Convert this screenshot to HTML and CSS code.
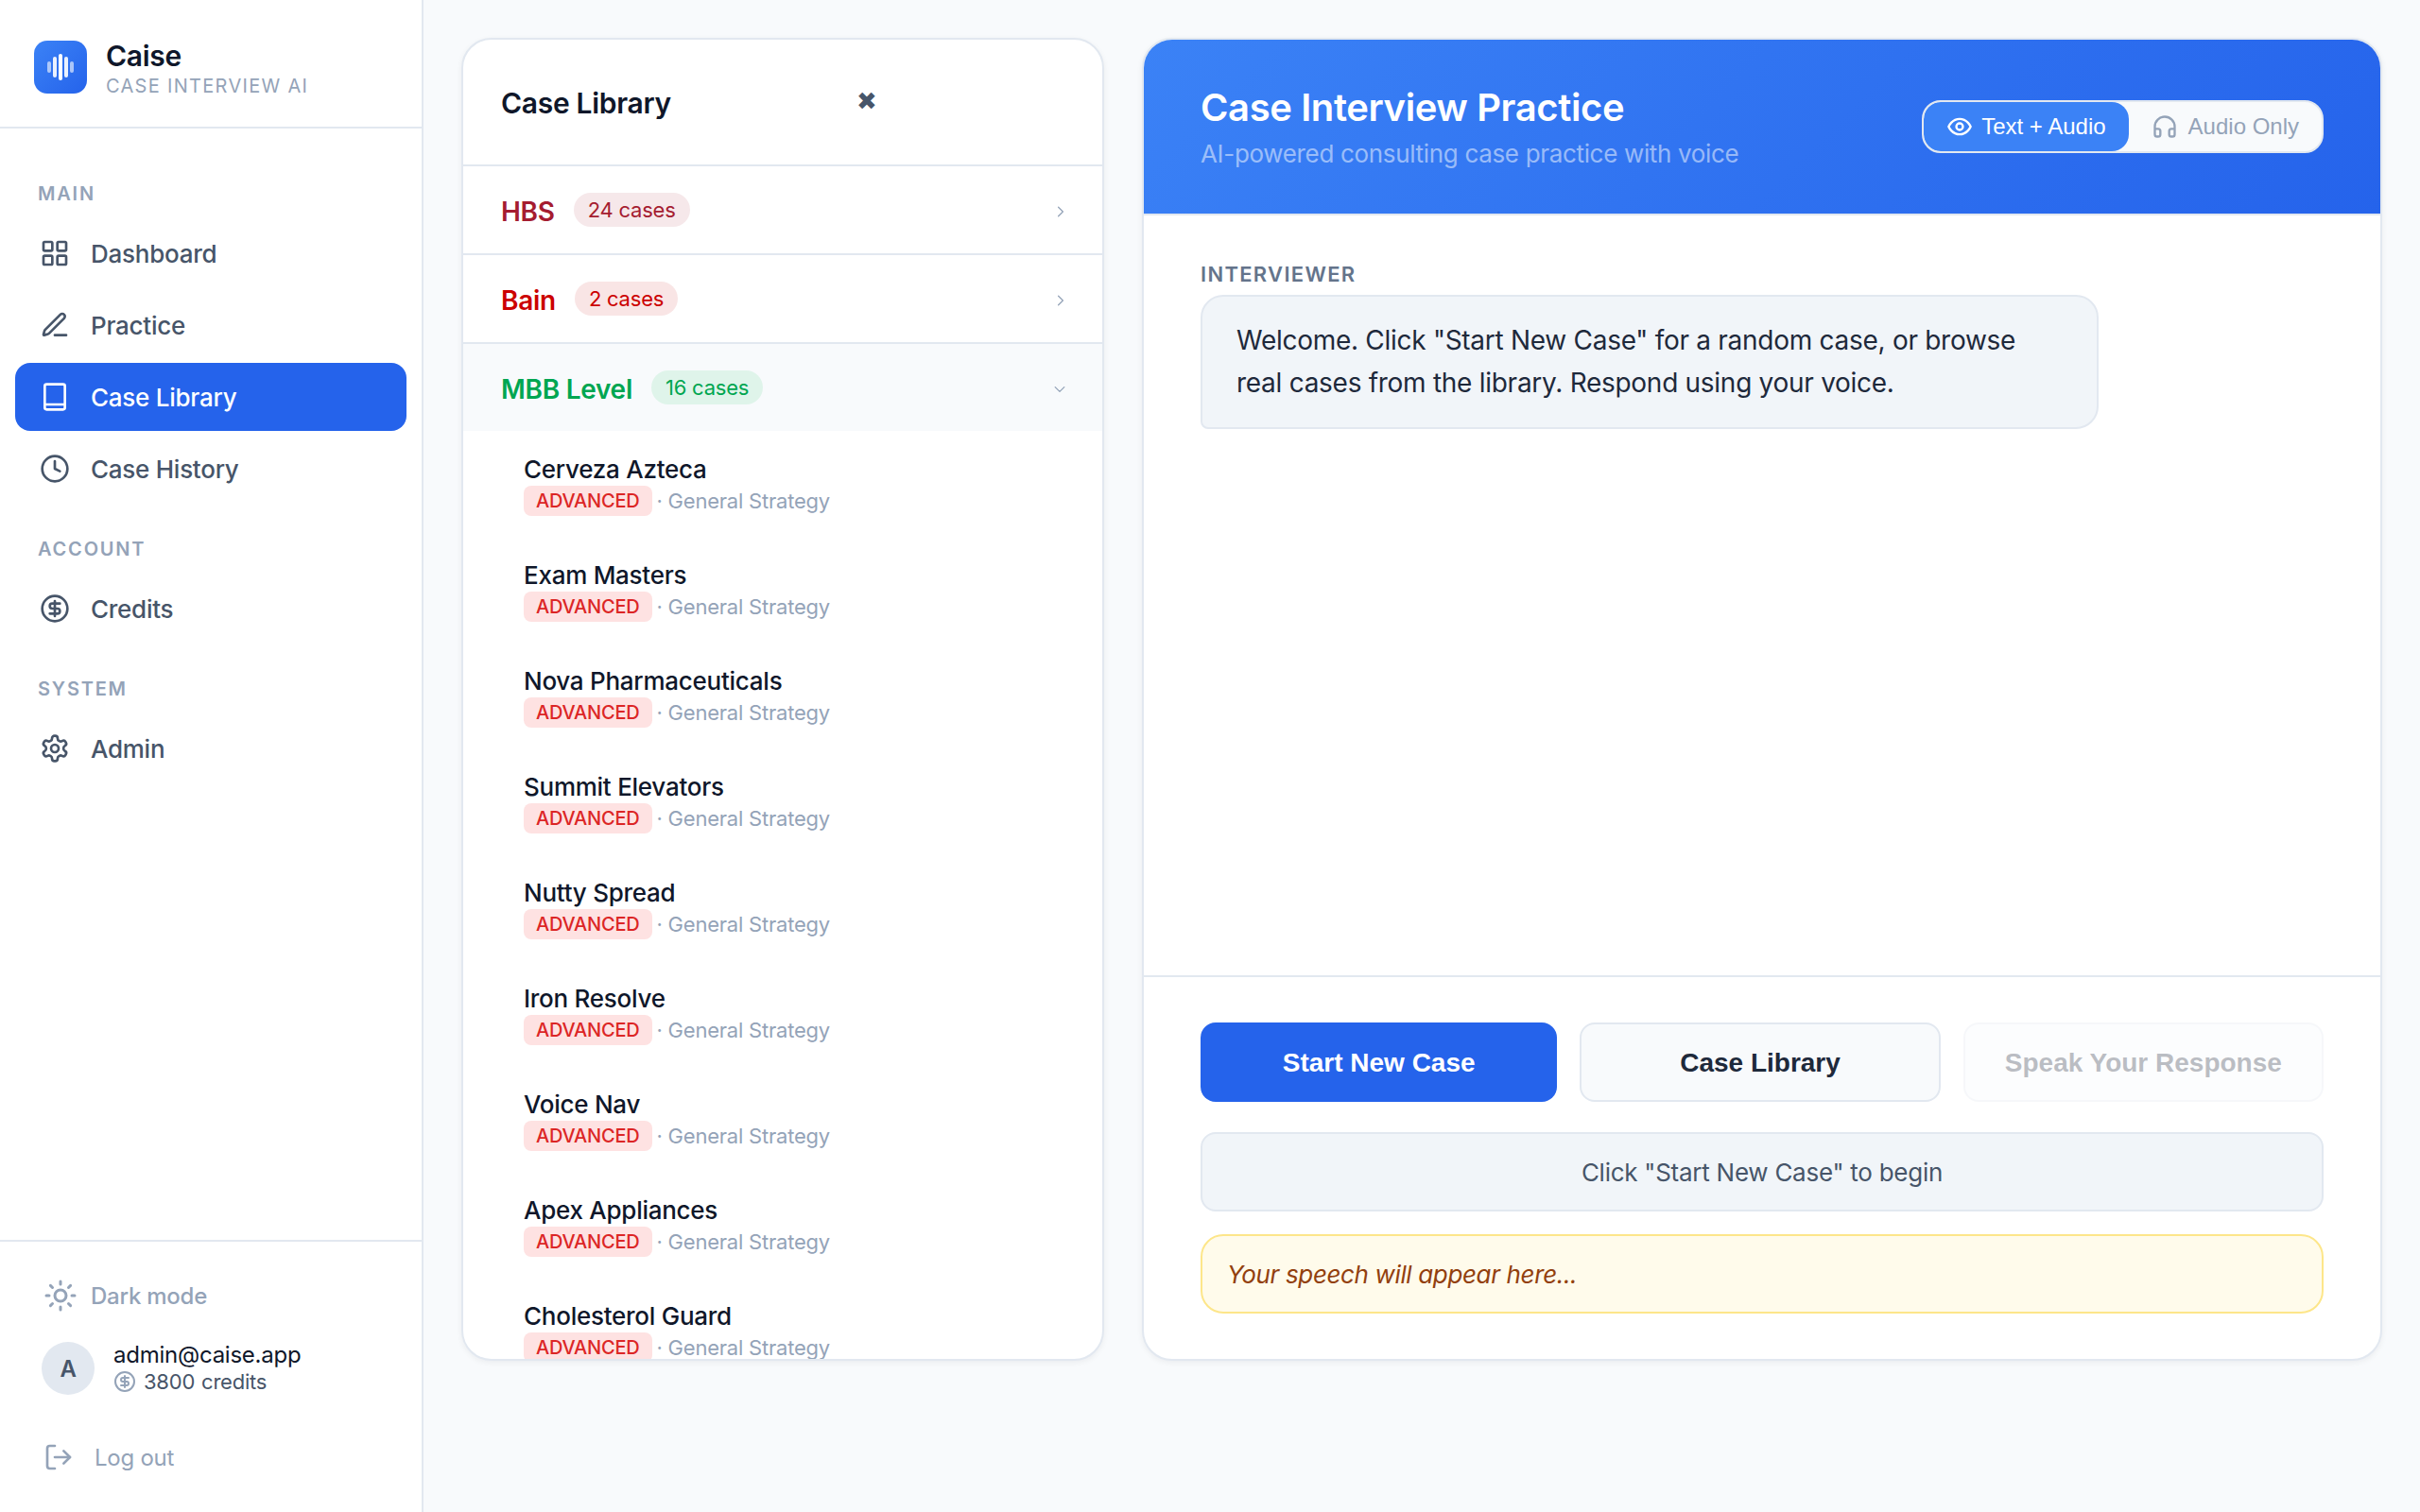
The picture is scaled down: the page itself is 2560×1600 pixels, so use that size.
FILE: index.html
```html
<!DOCTYPE html>
<html lang="en">
<head>
  <meta charset="UTF-8">
  <title>Caise - Case Interview Practice</title>
  <link rel="stylesheet" href="styles.css">
</head>
<body>

  <aside class="sidebar">
    <div class="brand">
      <div class="brand-logo">
        <span class="wave w1"></span><span class="wave w2"></span><span class="wave w3"></span><span class="wave w4"></span><span class="wave w5"></span>
      </div>
      <div class="brand-text">
        <div class="brand-name">Caise</div>
        <div class="brand-sub">CASE INTERVIEW AI</div>
      </div>
    </div>

    <nav class="nav">
      <div class="nav-label">MAIN</div>
      <div class="nav-group">
        <a class="nav-item">
          <svg class="icon" viewBox="0 0 24 24"><rect x="3" y="3" width="7" height="7" rx="1"/><rect x="14" y="3" width="7" height="7" rx="1"/><rect x="14" y="14" width="7" height="7" rx="1"/><rect x="3" y="14" width="7" height="7" rx="1"/></svg>
          Dashboard
        </a>
        <a class="nav-item">
          <svg class="icon" viewBox="0 0 24 24"><path d="M12 20h9"/><path d="M16.376 3.622a1 1 0 0 1 3.002 3.002L7.368 18.635a2 2 0 0 1-.855.506l-2.872.838a.5.5 0 0 1-.62-.62l.838-2.872a2 2 0 0 1 .506-.854z"/></svg>
          Practice
        </a>
        <a class="nav-item active">
          <svg class="icon" viewBox="0 0 24 24"><rect x="4" y="2" width="16" height="20" rx="1.5"/><path d="M4 18h16"/></svg>
          Case Library
        </a>
        <a class="nav-item">
          <svg class="icon" viewBox="0 0 24 24"><circle cx="12" cy="12" r="10"/><path d="M12 6v6l4 2"/></svg>
          Case History
        </a>
      </div>

      <div class="nav-label">ACCOUNT</div>
      <div class="nav-group">
        <a class="nav-item">
          <svg class="icon" viewBox="0 0 24 24"><circle cx="12" cy="12" r="10"/><path d="M16 8h-6a2 2 0 1 0 0 4h4a2 2 0 1 1 0 4H8"/><path d="M12 18V6"/></svg>
          Credits
        </a>
      </div>

      <div class="nav-label">SYSTEM</div>
      <div class="nav-group">
        <a class="nav-item">
          <svg class="icon" viewBox="0 0 24 24"><path d="M12.22 2h-.44a2 2 0 0 0-2 2v.18a2 2 0 0 1-1 1.73l-.43.25a2 2 0 0 1-2 0l-.15-.08a2 2 0 0 0-2.73.73l-.22.38a2 2 0 0 0 .73 2.73l.15.1a2 2 0 0 1 1 1.72v.51a2 2 0 0 1-1 1.74l-.15.09a2 2 0 0 0-.73 2.73l.22.38a2 2 0 0 0 2.73.73l.15-.08a2 2 0 0 1 2 0l.43.25a2 2 0 0 1 1 1.73V20a2 2 0 0 0 2 2h.44a2 2 0 0 0 2-2v-.18a2 2 0 0 1 1-1.73l.43-.25a2 2 0 0 1 2 0l.15.08a2 2 0 0 0 2.73-.73l.22-.39a2 2 0 0 0-.73-2.73l-.15-.08a2 2 0 0 1-1-1.74v-.5a2 2 0 0 1 1-1.74l.15-.09a2 2 0 0 0 .73-2.73l-.22-.38a2 2 0 0 0-2.73-.73l-.15.08a2 2 0 0 1-2 0l-.43-.25a2 2 0 0 1-1-1.73V4a2 2 0 0 0-2-2z"/><circle cx="12" cy="12" r="3"/></svg>
          Admin
        </a>
      </div>
    </nav>

    <div class="side-footer">
      <div class="dark-toggle">
        <svg class="icon-sun" viewBox="0 0 24 24"><circle cx="12" cy="12" r="4"/><path d="M12 2v2"/><path d="M12 20v2"/><path d="m4.93 4.93 1.41 1.41"/><path d="m17.66 17.66 1.41 1.41"/><path d="M2 12h2"/><path d="M20 12h2"/><path d="m6.34 17.66-1.41 1.41"/><path d="m19.07 4.93-1.41 1.41"/></svg>
        Dark mode
      </div>
      <div class="user">
        <div class="avatar">A</div>
        <div>
          <div class="user-email">admin@caise.app</div>
          <div class="user-credits">
            <svg class="icon-coin" viewBox="0 0 24 24"><circle cx="12" cy="12" r="10"/><path d="M16 8h-6a2 2 0 1 0 0 4h4a2 2 0 1 1 0 4H8"/><path d="M12 18V6"/></svg>
            <span>3800</span> <span>credits</span>
          </div>
        </div>
      </div>
      <div class="logout">
        <svg class="icon-logout" viewBox="0 0 24 24"><path d="M9 21H5a2 2 0 0 1-2-2V5a2 2 0 0 1 2-2h4"/><path d="m16 17 5-5-5-5"/><path d="M21 12H9"/></svg>
        Log out
      </div>
    </div>
  </aside>

  <main class="content">
    <section class="panel library">
      <div class="library-head">
        <h2>Case Library</h2>
        <span class="close">✖</span>
      </div>

      <div class="firm">
        <span class="firm-name hbs">HBS</span>
        <span class="firm-count hbs-count">24 cases</span>
        <svg class="chevron" viewBox="0 0 10 16"><path d="M2 2l6 6-6 6"/></svg>
      </div>
      <div class="firm">
        <span class="firm-name bain">Bain</span>
        <span class="firm-count bain-count">2 cases</span>
        <svg class="chevron" viewBox="0 0 10 16"><path d="M2 2l6 6-6 6"/></svg>
      </div>
      <div class="firm open">
        <span class="firm-name mbb">MBB Level</span>
        <span class="firm-count mbb-count">16 cases</span>
        <svg class="chevron-down" viewBox="0 0 16 10"><path d="M2 2l6 6 6-6"/></svg>
      </div>

      <div class="case-list">
        <div class="case-item">
          <div class="case-name">Cerveza Azteca</div>
          <div class="case-meta"><span class="level">ADVANCED</span><span>· General Strategy</span></div>
        </div>
        <div class="case-item">
          <div class="case-name">Exam Masters</div>
          <div class="case-meta"><span class="level">ADVANCED</span><span>· General Strategy</span></div>
        </div>
        <div class="case-item">
          <div class="case-name">Nova Pharmaceuticals</div>
          <div class="case-meta"><span class="level">ADVANCED</span><span>· General Strategy</span></div>
        </div>
        <div class="case-item">
          <div class="case-name">Summit Elevators</div>
          <div class="case-meta"><span class="level">ADVANCED</span><span>· General Strategy</span></div>
        </div>
        <div class="case-item">
          <div class="case-name">Nutty Spread</div>
          <div class="case-meta"><span class="level">ADVANCED</span><span>· General Strategy</span></div>
        </div>
        <div class="case-item">
          <div class="case-name">Iron Resolve</div>
          <div class="case-meta"><span class="level">ADVANCED</span><span>· General Strategy</span></div>
        </div>
        <div class="case-item">
          <div class="case-name">Voice Nav</div>
          <div class="case-meta"><span class="level">ADVANCED</span><span>· General Strategy</span></div>
        </div>
        <div class="case-item">
          <div class="case-name">Apex Appliances</div>
          <div class="case-meta"><span class="level">ADVANCED</span><span>· General Strategy</span></div>
        </div>
        <div class="case-item">
          <div class="case-name">Cholesterol Guard</div>
          <div class="case-meta"><span class="level">ADVANCED</span><span>· General Strategy</span></div>
        </div>
      </div>
    </section>

    <section class="panel practice">
      <header class="practice-head">
        <div class="practice-title">
          <h1>Case Interview Practice</h1>
          <p>AI-powered consulting case practice with voice</p>
        </div>
        <div class="mode-toggle">
          <button class="mode-btn active">
            <svg class="icon-mode" viewBox="0 0 24 24"><path d="M2 12s3-7 10-7 10 7 10 7-3 7-10 7-10-7-10-7Z"/><circle cx="12" cy="12" r="3"/></svg>
            Text + Audio
          </button>
          <button class="mode-btn">
            <svg class="icon-mode" viewBox="0 0 24 24"><path d="M3 14h3a2 2 0 0 1 2 2v3a2 2 0 0 1-2 2H5a2 2 0 0 1-2-2v-7a9 9 0 0 1 18 0v7a2 2 0 0 1-2 2h-1a2 2 0 0 1-2-2v-3a2 2 0 0 1 2-2h3"/></svg>
            Audio Only
          </button>
        </div>
      </header>

      <div class="conversation">
        <div class="speaker">INTERVIEWER</div>
        <div class="bubble">Welcome. Click "Start New Case" for a random case, or browse real cases from the library. Respond using your voice.</div>
      </div>

      <div class="controls">
        <div class="btn-row">
          <button class="btn btn-primary">Start New Case</button>
          <button class="btn btn-secondary">Case Library</button>
          <button class="btn btn-secondary disabled">Speak Your Response</button>
        </div>
        <div class="status">Click "Start New Case" to begin</div>
        <div class="transcript">Your speech will appear here...</div>
      </div>
    </section>
  </main>

</body>
</html>
```

FILE: styles.css
```css
* {
  box-sizing: border-box;
  letter-spacing: -0.01em;
}
body {
  font-family: Inter, "Liberation Sans", sans-serif;
  background-color: #f8fafc;
  color: #0f172a;
  display: flex;
  height: 1600px;
  margin: 0;
  overflow: hidden;
}

/* sidebar */
.sidebar {
  width: 448px;
  flex-shrink: 0;
  display: flex;
  flex-direction: column;
  background-color: #fff;
  border-right: 2px solid #e2e8f0;
}
.brand {
  height: 136px;
  display: flex;
  align-items: center;
  gap: 20px;
  padding: 8px 36px 0;
  border-bottom: 2px solid #e2e8f0;
}
.brand-logo {
  width: 56px;
  height: 56px;
  border-radius: 14px;
  background: linear-gradient(135deg, #3b82f6, #2563eb);
  display: flex;
  align-items: center;
  justify-content: center;
  gap: 2px;
}
.wave {
  width: 4px;
  border-radius: 2px;
  background-color: #fff;
}
.w1, .w5 { height: 12px; opacity: 0.6; }
.w2, .w4 { height: 22px; opacity: 0.9; }
.w3 { height: 28px; }
.brand-text {
  margin-top: 3px;
}
.brand-name {
  font-size: 30px;
  font-weight: 600;
  line-height: 36px;
  letter-spacing: -0.3px;
}
.brand-sub {
  font-size: 20px;
  line-height: 28px;
  color: #94a3b8;
  letter-spacing: 1.3px;
}
.nav {
  flex: 1;
  padding: 54px 16px 0 16px;
}
.nav-label {
  font-size: 20px;
  font-weight: 600;
  line-height: 30px;
  color: #94a3b8;
  letter-spacing: 1.8px;
  padding-left: 24px;
  margin-bottom: 12px;
}
.nav-group {
  display: flex;
  flex-direction: column;
  gap: 4px;
  margin-bottom: 34px;
}
.nav-item {
  height: 72px;
  display: flex;
  align-items: center;
  gap: 22px;
  padding-left: 26px;
  border-radius: 16px;
  font-size: 26px;
  font-weight: 500;
  color: #475569;
}
.nav-item.active {
  background-color: #2563eb;
  color: #fff;
}
.icon, .icon-sun, .icon-coin, .icon-logout, .icon-mode {
  fill: none;
  stroke: currentColor;
  stroke-width: 2;
  stroke-linecap: round;
  stroke-linejoin: round;
  flex-shrink: 0;
}
.icon {
  width: 32px;
  height: 32px;
}
.side-footer {
  height: 288px;
  border-top: 2px solid #e2e8f0;
  padding: 0 44px;
}
.dark-toggle {
  display: flex;
  align-items: center;
  gap: 14px;
  height: 40px;
  margin-top: 37px;
  margin-left: 2px;
  font-size: 24px;
  font-weight: 500;
  color: #94a3b8;
}
.icon-sun {
  width: 36px;
  height: 36px;
}
.user {
  display: flex;
  align-items: center;
  gap: 20px;
  margin-top: 29px;
}
.avatar {
  width: 56px;
  height: 56px;
  border-radius: 50%;
  background-color: #e2e8f0;
  color: #475569;
  font-size: 24px;
  font-weight: 600;
  display: flex;
  align-items: center;
  justify-content: center;
}
.user-email {
  font-size: 24px;
  line-height: 28px;
  color: #0f172a;
}
.user-credits {
  display: flex;
  align-items: center;
  gap: 7px;
  font-size: 22px;
  line-height: 28px;
  color: #475569;
}
.icon-coin {
  width: 24px;
  height: 24px;
  color: #94a3b8;
  margin-right: 1px;
}
.logout {
  display: flex;
  align-items: center;
  gap: 22px;
  margin-top: 46px;
  margin-left: 2px;
  font-size: 24px;
  color: #94a3b8;
  height: 40px;
}
.icon-logout {
  width: 32px;
  height: 32px;
}

/* panels */
.content {
  flex: 1;
  display: flex;
  gap: 40px;
  padding: 40px;
  align-items: flex-start;
}
.panel {
  height: 1400px;
  background-color: #fff;
  border: 2px solid #e2e8f0;
  border-radius: 32px;
  box-shadow: 0 2px 6px rgba(15, 23, 42, 0.06);
  overflow: hidden;
  display: flex;
  flex-direction: column;
}

/* library */
.library {
  width: 680px;
  flex-shrink: 0;
}
.library-head {
  height: 134px;
  display: flex;
  align-items: center;
  padding: 2px 0 0 40px;
  border-bottom: 2px solid #e2e8f0;
  flex-shrink: 0;
}
.library-head h2 {
  margin: 0;
  width: 376px;
  font-size: 30px;
  font-weight: 600;
}
.close {
  font-family: "DejaVu Sans", sans-serif;
  font-size: 26px;
  color: #475569;
  margin-bottom: 4px;
}
.firm {
  height: 94px;
  display: flex;
  align-items: center;
  gap: 20px;
  padding: 0 40px;
  border-bottom: 2px solid #e2e8f0;
  flex-shrink: 0;
}
.firm.open {
  height: 92px;
  background-color: #f8fafc;
  border-bottom: none;
}
.firm-name {
  font-size: 28px;
  font-weight: 600;
  padding-top: 3px;
}
.hbs { color: #a51c30; }
.bain { color: #cc0000; }
.mbb { color: #00a651; }
.firm-count {
  font-size: 22px;
  line-height: 36px;
  padding: 0 15px;
  border-radius: 18px;
}
.hbs-count { color: #a51c30; background-color: #f6e8ea; }
.bain-count { color: #cc0000; background-color: #f9e5e5; }
.mbb-count { color: #00a651; background-color: #dff4ea; }
.chevron, .chevron-down {
  fill: none;
  stroke: #94a3b8;
  stroke-width: 1.6;
  stroke-linecap: round;
  stroke-linejoin: round;
  margin-left: auto;
  margin-top: 3px;
}
.chevron {
  width: 8px;
  height: 14px;
}
.chevron-down {
  width: 14px;
  height: 8px;
  margin-right: -2px;
}
.case-list {
  flex: 1;
  overflow: hidden;
}
.case-item {
  height: 112px;
  padding: 24px 40px 0 64px;
}
.case-name {
  font-size: 26px;
  font-weight: 500;
  line-height: 34px;
}
.case-meta {
  display: flex;
  align-items: center;
  gap: 5px;
  font-size: 22px;
  color: #94a3b8;
}
.level {
  height: 32px;
  line-height: 33px;
  padding: 0 13px;
  border-radius: 8px;
  background-color: #fee2e2;
  color: #dc2626;
  font-size: 20px;
  font-weight: 500;
}

/* practice */
.practice {
  flex: 1;
}
.practice-head {
  height: 186px;
  flex-shrink: 0;
  display: flex;
  align-items: center;
  justify-content: space-between;
  padding: 0 60px;
  background: linear-gradient(135deg, #3b82f6, #2563eb);
  border-bottom: 2px solid #e2e8f0;
  color: #fff;
}
.practice-title {
  padding-top: 1px;
}
.practice-head h1 {
  margin: 0 0 5px;
  font-size: 40px;
  font-weight: 600;
  line-height: 52px;
}
.practice-head p {
  margin: 0;
  font-size: 26px;
  line-height: 36px;
  letter-spacing: -0.33px;
  color: rgba(255, 255, 255, 0.5);
}
.mode-toggle {
  display: flex;
  height: 56px;
  background-color: #f8fafc;
  border: 2px solid #e2e8f0;
  border-radius: 20px;
  overflow: hidden;
}
.mode-btn {
  display: flex;
  align-items: center;
  gap: 11px;
  padding: 0 24px;
  border: none;
  background: none;
  font-family: "Liberation Sans", Arial, sans-serif;
  font-size: 24px;
  letter-spacing: normal;
  color: #94a3b8;
}
.mode-btn.active {
  gap: 9px;
  background-color: #3b82f6;
  color: #fff;
  border-radius: 18px;
}
.icon-mode {
  width: 28px;
  height: 28px;
}
.conversation {
  flex: 1;
  padding: 46px 60px 0;
}
.speaker {
  font-size: 22px;
  font-weight: 600;
  line-height: 32px;
  color: #64748b;
  letter-spacing: 1.3px;
  margin-bottom: 6px;
}
.bubble {
  width: 950px;
  padding: 24px 36px;
  background-color: #f1f5f9;
  border: 2px solid #e2e8f0;
  border-radius: 24px 24px 24px 8px;
  font-size: 28px;
  line-height: 1.6;
  color: #1e293b;
}
.controls {
  flex-shrink: 0;
  border-top: 2px solid #e2e8f0;
  padding: 48px 60px;
  display: flex;
  flex-direction: column;
  gap: 24px;
}
.btn-row {
  display: flex;
  gap: 24px;
  margin-bottom: 8px;
}
.btn {
  flex: 1;
  height: 84px;
  padding: 2px 0 0;
  border-radius: 16px;
  font-family: "Liberation Sans", Arial, sans-serif;
  font-size: 28px;
  font-weight: 700;
  letter-spacing: normal;
}
.btn-primary {
  background-color: #2563eb;
  border: none;
  color: #fff;
}
.btn-secondary {
  background-color: #f8fafc;
  border: 2px solid #e2e8f0;
  color: #1e293b;
}
.btn.disabled {
  opacity: 0.3;
}
.status {
  height: 84px;
  display: flex;
  align-items: center;
  justify-content: center;
  background-color: #f1f5f9;
  border: 2px solid #e2e8f0;
  border-radius: 16px;
  font-size: 26px;
  color: #475569;
}
.transcript {
  height: 84px;
  display: flex;
  align-items: center;
  padding: 0 26px;
  background-color: #fffbeb;
  border: 2px solid #fde68a;
  border-radius: 24px;
  font-size: 26px;
  letter-spacing: -0.36px;
  font-style: italic;
  color: #92400e;
}
```
